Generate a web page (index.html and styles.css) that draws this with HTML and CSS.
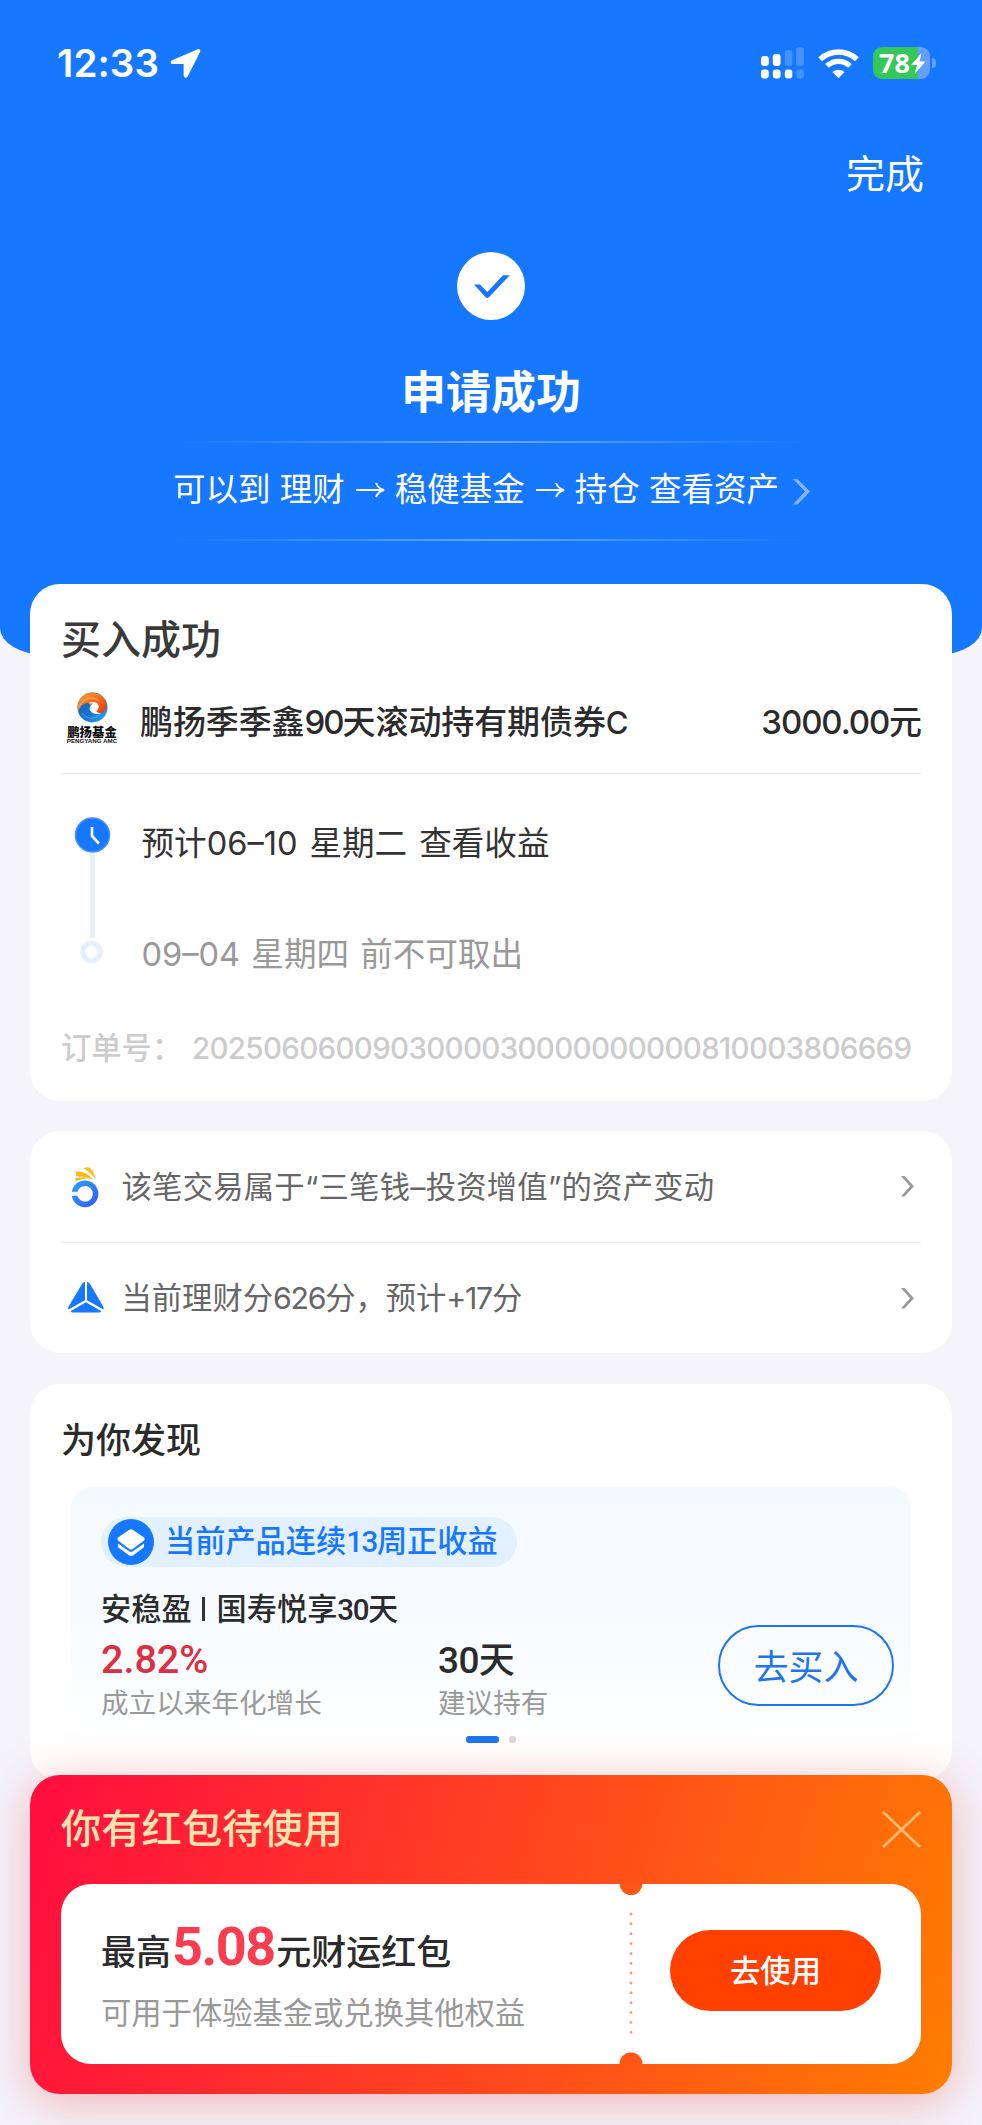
FILE: index.html
```html
<!DOCTYPE html>
<html lang="zh-CN">
<head>
<meta charset="utf-8">
<title>申请成功</title>
<link rel="stylesheet" href="styles.css">
</head>
<body>
<div class="screen">
  <header class="hero">
    <div class="status">
      <span class="status-time">12:33</span>
      <svg class="status-loc" width="31" height="31" viewBox="0 0 32 32"><path d="M28.6 1.3 2.2 12.6C-.1 13.6.5 16.6 2.9 16.6h11.2v11.6c0 2.7 3.2 3.3 4.3.9L31 4.2c.9-2-.6-3.6-2.4-2.9z" fill="#fff"/></svg>
      <div class="status-right">
        <svg width="43" height="32" viewBox="0 0 43 32" fill="#fff">
          <rect x="0" y="9" width="7.800" height="10" rx="3"/><rect x="11.800" y="7" width="7.800" height="12" rx="3"/>
          <rect x="23.800" y="3" width="7.500" height="16" rx="2.500" opacity=".2"/><rect x="35.200" y="0" width="7.800" height="19" rx="2.500" opacity=".2"/>
          <rect x="0" y="22.500" width="7.800" height="9" rx="3"/><rect x="11.800" y="22.500" width="7.800" height="9" rx="3"/><rect x="23.800" y="22.500" width="7.500" height="9" rx="3"/><rect x="35.200" y="22.500" width="7.800" height="9" rx="3" opacity=".2"/>
        </svg>
        <svg class="wifi" width="41" height="31" viewBox="0 0 42 31" fill="none" stroke="#fff">
          <path d="M2.200 11.200a27.500 27.500 0 0 1 37.600 0" stroke-width="5.500"/>
          <path d="M9.200 18a17.300 17.300 0 0 1 23.600 0" stroke-width="5.300"/>
          <path d="M21 30.500l-6.200-6.200a9 9 0 0 1 12.400 0z" fill="#fff" stroke="none"/>
        </svg>
        <div class="battery">
          <span class="battery-body"><span class="battery-num">78</span><svg width="15" height="21" viewBox="0 0 15 21"><path d="M10.500 0 0 12h6l-2.500 9L14.500 8.500h-6z" fill="#fff"/></svg></span>
          <span class="battery-cap"></span>
        </div>
      </div>
    </div>
    <div class="done">完成</div>
    <svg class="check" width="70" height="70" viewBox="0 0 70 70"><circle cx="35" cy="35" r="34" fill="#fff"/><path d="M18 33.600h6L31.300 41 47 24.300h6.800L33 46.300q-1.700 1.500-3.400 0z" fill="#1677ff"/></svg>
    <h1 class="hero-title">申请成功</h1>
    <div class="hero-line"></div>
    <div class="hero-link">
      <span>可以到 理财</span>
      <svg class="arrow" width="29" height="20" viewBox="0 0 29 20" fill="none" stroke="#fff" stroke-width="1.900"><path d="M0 10h28M20 3c1.500 3.800 4 6 8 7-4 1-6.500 3.200-8 7"/></svg>
      <span>稳健基金</span>
      <svg class="arrow" width="29" height="20" viewBox="0 0 29 20" fill="none" stroke="#fff" stroke-width="1.900"><path d="M0 10h28M20 3c1.500 3.800 4 6 8 7-4 1-6.500 3.200-8 7"/></svg>
      <span>持仓 查看资产</span>
      <svg class="hero-chevron" width="17" height="27" viewBox="0 0 17 27"><path d="M0 1h4.500L17 13.500 4.500 26.500H0L12 13.500z" fill="#a5cbff" opacity=".75"/></svg>
    </div>
    <div class="hero-line"></div>
  </header>

  <main class="cards">
    <section class="card order">
      <h2 class="order-title">买入成功</h2>
      <div class="fund">
        <div class="fund-logo">
          <svg width="31" height="31" viewBox="0 0 32 32">
            <defs>
              <linearGradient id="warm" x1="0" y1="0" x2="1" y2="1"><stop offset="0" stop-color="#ffa12a"/><stop offset=".55" stop-color="#f4681c"/><stop offset="1" stop-color="#e8320c"/></linearGradient>
              <linearGradient id="cool" x1="0" y1="0" x2="1" y2="1"><stop offset="0" stop-color="#1459b8"/><stop offset=".6" stop-color="#1675d2"/><stop offset="1" stop-color="#2cb9f5"/></linearGradient>
            </defs>
            <circle cx="16" cy="16" r="15.500" fill="url(#cool)"/>
            <path d="M1.500 20.500A15.300 15.300 0 0 1 16 .5c8.500.3 14.500 7 14.300 13.500-.2 5-3.500 8.200-7.300 7.700l-3-1.700-8.500-9C7 11.500 3 14.500 1.500 20.500z" fill="url(#warm)"/>
            <path d="M12 11.500c3-1.700 8-1.500 9.700 1.200 1.300 2.600.6 5-1.700 7.300 1.500 1.400 3 1.800 4.500 1.700-3 1.600-7 1.300-9.500-.7-2-1.700-2.500-4-1.400-6.200.7-1.400 2-2 2.600-3z" fill="#fff"/>
            <path d="M2 15.500C7 5 18 4.500 23 9.500" fill="none" stroke="#fff" stroke-width=".6" opacity=".7"/>
            <path d="M5 22c4 6 14 7.500 20-.5" fill="none" stroke="#fff" stroke-width=".6" opacity=".5"/>
          </svg>
          <span class="logo-cn">鹏扬基金</span>
          <span class="logo-en">PENGYANG AMC</span>
        </div>
        <span class="fund-name">鹏扬季季鑫<span class="tight">90</span>天滚动持有期债券<span class="fund-class">C</span></span>
        <span class="fund-amount">3000.00元</span>
      </div>
      <div class="timeline">
        <svg class="timeline-track" width="37" height="148" viewBox="0 0 37 148">
          <path d="M18.500 36v85.500" stroke="#e5f0ff" stroke-width="5"/>
          <circle cx="18.500" cy="18" r="17" fill="#1677ff" stroke="#4791f8" stroke-width="1.500"/>
          <path d="M18 10v9l7 7.500" fill="none" stroke="#fff" stroke-width="2.600"/>
          <circle cx="17.500" cy="135" r="8.700" fill="#fff" stroke="#e5f0ff" stroke-width="5"/>
        </svg>
        <div class="timeline-text">
          <p class="step">预计06–10 星期二 查看收益</p>
          <p class="step step-muted">09–04 星期四 前不可取出</p>
        </div>
      </div>
      <div class="order-no"><span class="order-label">订单号：</span><span class="order-digits">2025060600903000030000000000810003806669</span></div>
    </section>

    <section class="card links">
      <div class="link-row">
        <svg class="link-icon" width="36" height="44" viewBox="0 0 36 44">
          <defs><linearGradient id="ring" x1="0" y1="0" x2="1" y2="1"><stop offset="0" stop-color="#2ea0ff"/><stop offset=".5" stop-color="#2f80f6"/><stop offset="1" stop-color="#3455fb"/></linearGradient></defs>
          <path d="M3.750 26.800A13.400 13.400 0 1 1 3.750 30.800H9.500A7.800 7.800 0 1 0 9.500 26.800z" fill="url(#ring)"/>
          <path d="M7 13.500q10-2.500 16.500.3Q15 12.500 8 16z" fill="#f3b91b"/>
          <path d="M7 6.500q11-1 18.500 8.300Q19 11 7.500 11.500q1.800-3-.5-5z" fill="#f3b91b"/>
          <path d="M15.500 3.200Q22 .3 25.500 7l2.500 8Q23 7.800 15.500 3.200z" fill="#f5c123"/>
        </svg>
        <span class="link-text link-text-a">该笔交易属于“三笔钱–投资增值”的资产变动</span>
        <svg class="chev" width="13" height="21" viewBox="0 0 13 21"><path d="M0 0h3.500L13 10.300 3.500 20.600H0L9 10.300z" fill="#999"/></svg>
      </div>
      <div class="link-row">
        <svg class="link-icon" width="36" height="44" viewBox="0 0 36 44" fill="#1677ff"><path d="M17 6v18.300L.3 33.500Q-.2 32 .6 30.600L14 8q1-2 3-2zM19 6v18.300l16.500 9.200q.5-1.500-.3-2.900L22 8q-1-2-3-2zM18 26.300l15.500 9-1.500 1.200H4l-1.500-1.200z"/></svg>
        <span class="link-text">当前理财分<span class="num">626</span>分，预计<span class="num">+17</span>分</span>
        <svg class="chev" width="13" height="21" viewBox="0 0 13 21"><path d="M0 0h3.500L13 10.300 3.500 20.600H0L9 10.300z" fill="#999"/></svg>
      </div>
    </section>

    <section class="card discover">
      <h2 class="discover-title">为你发现</h2>
      <div class="product">
        <div class="tag">
          <svg width="46" height="46" viewBox="0 0 46 46"><circle cx="23" cy="23" r="23" fill="#1677ff"/><path d="M21.300 10.800q1.700-.9 3.400 0l11.300 7.700q1.500 1.500 0 3L24.700 30q-1.700 1-3.400 0L10 21.500q-1.500-1.500 0-3z" fill="#fff"/><path d="M10 24.500v3.800L21.500 36.700q1.500.9 3 0L36 28.300v-3.800l-11.500 8q-1.500.9-3 0z" fill="#fff"/></svg>
          <span class="tag-text">当前产品连续<b class="din">13</b>周正收益</span>
        </div>
        <div class="product-name">安稳盈<i class="bar"></i>国寿悦享<b class="din">30</b>天</div>
        <div class="product-row">
          <div class="metric metric-rate"><span class="rate">2.82%</span><span class="caption">成立以来年化增长</span></div>
          <div class="metric"><span class="days"><b class="din-lg">30</b>天</span><span class="caption">建议持有</span></div>
          <div class="buy">去买入</div>
        </div>
        <div class="pager"><span class="pager-on"></span><span class="pager-off"></span></div>
      </div>
    </section>

    <section class="coupon">
      <div class="coupon-head">
        <h2 class="coupon-title">你有红包待使用</h2>
        <svg width="39" height="37" viewBox="0 0 40 38" stroke="#ffbd73" stroke-width="2.700"><path d="M1 1l38 36M39 1 1 37"/></svg>
      </div>
      <div class="ticket">
        <div class="ticket-main">
          <div class="ticket-title">最高<b class="amount">5.08</b>元财运红包</div>
          <div class="ticket-sub">可用于体验基金或兑换其他权益</div>
        </div>
        <svg class="perforation" width="24" height="180" viewBox="0 0 24 180">
          <circle cx="12" cy="-.5" r="11.500" fill="#ff5515"/><circle cx="12" cy="180" r="11.500" fill="#ff5515"/>
          <path d="M12 30V150" stroke="#e9a48c" stroke-width="3" stroke-linecap="round" stroke-dasharray="0 9.850"/>
        </svg>
        <div class="use">去使用</div>
      </div>
    </section>
  </main>
</div>
</body>
</html>
```
FILE: styles.css
```css
* { box-sizing: border-box; }
body {
  margin: 0;
  background: #f4f4f9;
  font-family: Inter, "Noto Sans CJK SC", sans-serif;
  color: #333;
}
h1, h2, p { margin: 0; font-weight: 400; }
svg { display: block; flex: none; overflow: visible; }
.perforation { overflow: hidden; }
.screen { width: 982px; height: 2125px; overflow: hidden; }

/* Header */
.hero {
  height: 655px;
  padding-top: 42px;
  background: #1677ff;
  color: #fff;
  border-radius: 0 0 46px 46px / 0 0 27px 27px;
  display: flex;
  flex-direction: column;
  align-items: center;
}
.status {
  width: 100%;
  height: 42px;
  padding: 0 46px 0 57px;
  display: flex;
  align-items: center;
}
.status-time { width: 113px; font-size: 38.500px; font-weight: 600; line-height: 42px; letter-spacing: .1px; white-space: nowrap; }
.status-right { margin-left: auto; display: flex; align-items: center; }
.wifi { margin-left: 14px; }
.battery { margin-left: 14px; display: flex; align-items: center; gap: 2px; }
.battery-body {
  width: 57px; height: 32px; padding-left: 6px;
  border-radius: 9px;
  background: linear-gradient(90deg, #34c759 0 45px, #629fff 45px);
  display: flex; align-items: center;
}
.battery-num { width: 32px; font: 700 27px/32px "Open Sans", sans-serif; }
.battery-cap { width: 4px; height: 10px; border-radius: 0 4px 4px 0; background: #629fff; }
.done {
  align-self: flex-end;
  margin: 65px 58px 0 0;
  height: 50px;
  font-size: 39px;
  line-height: 50px;
}
.check { margin-top: 52px; }
.hero-title { margin-top: 42px; height: 60px; font-size: 45px; font-weight: 700; line-height: 60px; }
.hero-line { margin-top: 18px; width: 640px; height: 2px; background: linear-gradient(90deg, transparent, rgba(255,255,255,.35) 50%, transparent); }
.hero-link { margin-top: 23px; height: 48px; padding-left: 1px; display: flex; align-items: center; font-size: 32.5px; line-height: 48px; white-space: nowrap; }
.arrow { margin: 0 10px 0 11px; }
.hero-chevron { margin: 2px 0 0 14px; }
.hero-link + .hero-line { margin-top: 25px; }

/* Cards */
.cards { margin-top: -71px; padding: 0 30px; display: flex; flex-direction: column; }
.card { position: relative; background: #fff; border-radius: 30px; padding: 0 31px; }
.order { height: 517px; padding-top: 31px; }
.order-title { height: 50px; font-size: 40px; font-weight: 500; line-height: 50px; color: #3a3a3a; }
.fund { margin-top: 26px; height: 83px; display: flex; border-bottom: 1.500px solid #ebebeb; color: #2b2b2b; }
.fund-logo { width: 62px; height: 60px; display: flex; flex-direction: column; align-items: center; padding-top: 1px; }
.logo-cn { margin-top: 2px; font: 900 12.400px/14px "Noto Sans CJK SC", sans-serif; color: #111; }
.logo-en { width: 62px; margin-top: -1px; text-align: center; font: 700 6.200px/5px "Liberation Sans", sans-serif; color: #111; white-space: nowrap; }
.fund-name { margin-left: 17px; font-size: 33px; font-weight: 500; line-height: 62px; white-space: nowrap; letter-spacing: -.1px; }
.tight { letter-spacing: -2px; }
.fund-class { font-size: 31px; }
.fund-amount { margin-left: auto; font-size: 33px; font-weight: 500; line-height: 62px; letter-spacing: -1.100px; }
.timeline { margin-top: 43px; display: flex; padding-left: 13px; gap: 30.500px; }
.timeline-text { padding-top: 2px; }
.step { height: 48px; font-size: 32.600px; line-height: 48px; white-space: nowrap; word-spacing: 2.800px; }
.step-muted { margin-top: 63px; word-spacing: 2px; color: #999; }
.order-no { margin-top: 48px; height: 44px; display: flex; font-size: 30.300px; line-height: 44px; color: #ccc; white-space: nowrap; }
.order-label { width: 131px; font-weight: 500; }
.order-digits { font-size: 29.500px; font-weight: 500; letter-spacing: -.680px; }

.links { margin-top: 30px; height: 222px; }
.link-row { height: 111px; padding: 0 7px; display: flex; align-items: center; color: #666; }
.link-row + .link-row { border-top: 1.500px solid #f0f0f0; }
.link-text { margin-left: 17.500px; font-size: 30.300px; line-height: 44px; white-space: nowrap; }
.link-text-a { letter-spacing: .270px; }
.num { letter-spacing: -1.300px; }
.chev { margin-left: auto; }

.discover { margin-top: 31px; height: 396px; padding-top: 31px; }
.discover-title { height: 50px; font-size: 35px; font-weight: 500; line-height: 50px; color: #2b2b2b; }
.product {
  margin: 22px 10px 0;
  height: 270px;
  padding: 30px 17px 0 30px;
  border-radius: 22px;
  background: linear-gradient(180deg, #f2fbff 0, #f6fbff 40px, #f7fbff 140px, #fff 250px);
  display: flex;
  flex-direction: column;
}
.tag { align-self: flex-start; width: 416px; height: 50px; border-radius: 25px; background: #e3f0ff; padding-left: 7px; display: flex; align-items: center; color: #1677ff; }
.tag-text { margin-left: 11px; font-size: 30.200px; font-weight: 500; line-height: 51px; white-space: nowrap; }
.din { font-family: Roboto, sans-serif; font-weight: 500; font-size: 29.500px; letter-spacing: -1.400px; }
.product-name { margin-top: 20px; height: 44px; font-size: 30.200px; font-weight: 500; line-height: 44px; display: flex; align-items: baseline; white-space: nowrap; color: #2b2b2b; }
.bar { width: 3px; height: 24px; margin: 0 12px 0 10px; background: #333; align-self: center; }
.product-row { display: flex; }
.metric { display: flex; flex-direction: column; white-space: nowrap; }
.metric-rate { width: 337px; }
.rate { height: 56px; font: 500 39.500px/58px Roboto, sans-serif; color: #dc2f3f; }
.days { height: 56px; font-size: 36px; font-weight: 500; line-height: 58px; color: #2b2b2b; }
.din-lg { font-family: Roboto, sans-serif; font-weight: 500; font-size: 37px; letter-spacing: -.600px; }
.caption { height: 32px; font-size: 27.600px; line-height: 32px; color: #999; }
.buy { margin: -6px 0 0 auto; width: 176px; height: 81px; border: 2.500px solid #1f75ee; border-radius: 41px; text-align: center; font-size: 34.800px; line-height: 81px; color: #1f75ee; }
.pager { margin-top: 17px; padding-left: 365px; display: flex; gap: 10px; }
.pager-on { width: 33px; height: 7px; border-radius: 3px; background: #1f75ee; }
.pager-off { width: 7px; height: 7px; border-radius: 3px; background: #ddd8dc; }

/* Coupon */
.coupon {
  position: relative;
  margin-top: -5px;
  height: 319px;
  padding: 24px 31px 0;
  border-radius: 30px;
  background: linear-gradient(106deg, #ff0f3e 2%, #ff4320 50%, #ff7d00 100%);
  box-shadow: 0 8px 48px rgba(240, 50, 60, .34);
}
.coupon-head { height: 60px; display: flex; justify-content: space-between; align-items: center; }
.coupon-title { font-size: 40.300px; font-weight: 500; line-height: 62px; color: #ffe4b0; }
.ticket { margin-top: 25px; height: 180px; border-radius: 30px; background: #fff; display: flex; align-items: center; }
.ticket-main { width: 558px; height: 180px; padding: 35px 0 0 40px; white-space: nowrap; }
.ticket-title { height: 66px; font-size: 35px; font-weight: 500; line-height: 66px; color: #2b2b2b; }
.amount { margin: 0 1.500px 0 1px; font-family: Roboto, sans-serif; font-weight: 700; font-size: 54px; line-height: 50px; letter-spacing: -1.500px; color: #fa3c50; }
.ticket-sub { margin-top: 6px; height: 44px; font-size: 30.300px; line-height: 44px; color: #999; }
.use { margin: -7px 0 0 27px; width: 211px; height: 81px; border-radius: 41px; background: #ff4000; color: #fff; text-align: center; font-size: 30.300px; font-weight: 500; line-height: 83px; }
```
